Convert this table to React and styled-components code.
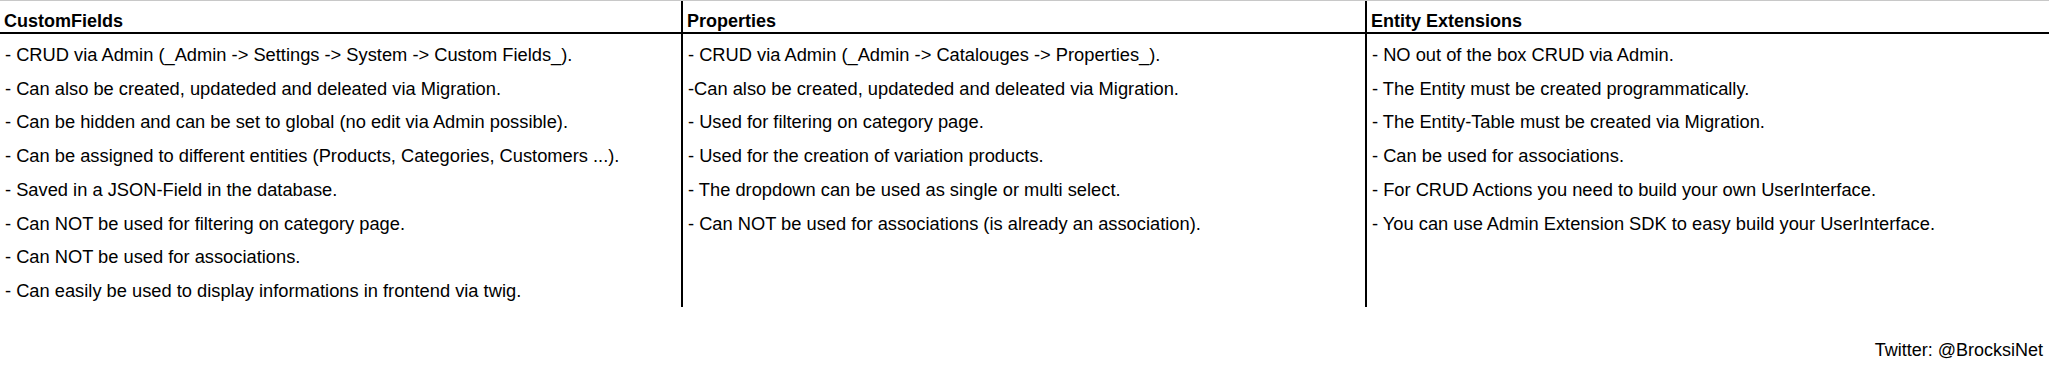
import React from "react";
import styled, { createGlobalStyle } from "styled-components";

const Global = createGlobalStyle`
  html, body {
    margin: 0;
    padding: 0;
    background: #fff;
  }
  body {
    font-family: "Liberation Sans", Arial, sans-serif;
    color: #000;
  }
`;

const Page = styled.div`
  width: 2058px;
  height: 374px;
  display: flex;
  flex-direction: column;
`;

const Table = styled.div`
  width: 2049px;
  display: grid;
  grid-template-columns: 682px 684px 683px;
  border-top: 1px solid #c8c8c8;
`;

const Column = styled.div`
  display: flex;
  flex-direction: column;
  border-left: ${(p) => (p.first ? "none" : "2px solid #000")};
  margin-left: ${(p) => (p.first ? "0" : "-1px")};
  height: 306px;
`;

const Head = styled.div`
  height: 33px;
  display: flex;
  align-items: center;
  padding-top: 9px;
  box-sizing: border-box;
  font-weight: bold;
  font-size: 18px;
  border-bottom: 2px solid #000;
  margin-left: ${(p) => (p.first ? "0" : "-2px")};
  padding-left: ${(p) => (p.first ? "4px" : "6px")};
`;

const Item = styled.div`
  height: 33.75px;
  display: flex;
  align-items: center;
  padding: 8px 0 0 5px;
  box-sizing: border-box;
  font-size: 18.3px;
  white-space: nowrap;
`;

const Footer = styled.div`
  display: flex;
  justify-content: flex-end;
  padding: 33px 15px 0 0;
  font-size: 18px;
`;

const columns = [
  {
    title: "CustomFields",
    items: [
      "- CRUD via Admin (_Admin -> Settings -> System -> Custom Fields_).",
      "- Can also be created, updateded and deleated via Migration.",
      "- Can be hidden and can be set to global (no edit via Admin possible).",
      "- Can be assigned to different entities (Products, Categories, Customers ...).",
      "- Saved in a JSON-Field in the database.",
      "- Can NOT be used for filtering on category page.",
      "- Can NOT be used for associations.",
      "- Can easily be used to display informations in frontend via twig.",
    ],
  },
  {
    title: "Properties",
    items: [
      "- CRUD via Admin (_Admin -> Catalouges -> Properties_).",
      "-Can also be created, updateded and deleated via Migration.",
      "- Used for filtering on category page.",
      "- Used for the creation of variation products.",
      "- The dropdown can be used as single or multi select.",
      "- Can NOT be used for associations (is already an association).",
    ],
  },
  {
    title: "Entity Extensions",
    items: [
      "- NO out of the box CRUD via Admin.",
      "- The Entity must be created programmatically.",
      "- The Entity-Table must be created via Migration.",
      "- Can be used for associations.",
      "- For CRUD Actions you need to build your own UserInterface.",
      "- You can use Admin Extension SDK to easy build your UserInterface.",
    ],
  },
];

export default function App() {
  return (
    <Page>
      <Global />
      <Table>
        {columns.map((col, i) => (
          <Column key={col.title} first={i === 0}>
            <Head first={i === 0}>{col.title}</Head>
            {col.items.map((t) => (
              <Item key={t}>{t}</Item>
            ))}
          </Column>
        ))}
      </Table>
      <Footer>Twitter: @BrocksiNet</Footer>
    </Page>
  );
}
